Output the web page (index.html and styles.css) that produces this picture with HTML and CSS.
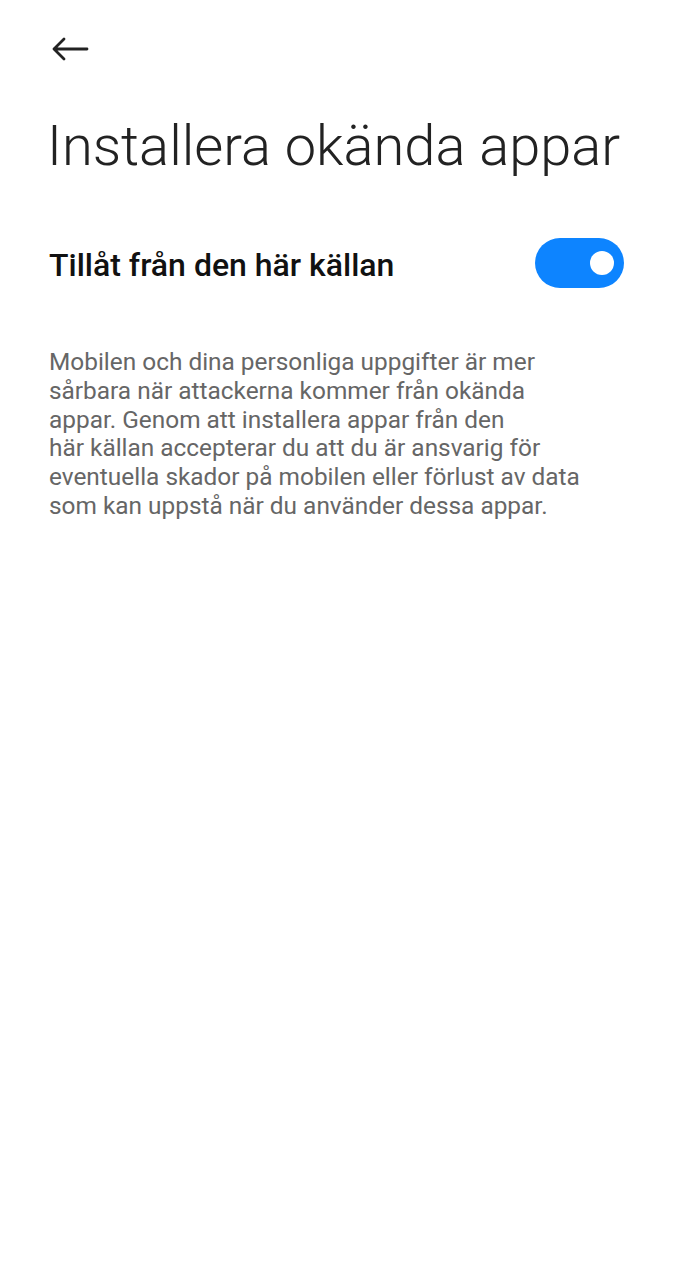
FILE: index.html
```html
<!DOCTYPE html>
<html lang="sv">
<head>
<meta charset="utf-8">
<link rel="stylesheet" href="styles.css">
</head>
<body>
<div class="page">
  <header class="topbar">
    <svg class="back" viewBox="0 0 40 26" width="40" height="26">
      <path d="M37 13 H4 M14 3 L4 13 L14 23" fill="none" stroke="#222" stroke-width="2.8" stroke-linecap="round" stroke-linejoin="round"/>
    </svg>
  </header>
  <h1 class="title">Installera okända appar</h1>
  <div class="row">
    <span class="label">Tillåt från den här källan</span>
    <div class="switch"><div class="knob"></div></div>
  </div>
  <p class="desc">Mobilen och dina personliga uppgifter är mer<br>sårbara när attackerna kommer från okända<br>appar. Genom att installera appar från den<br>här källan accepterar du att du är ansvarig för<br>eventuella skador på mobilen eller förlust av data<br>som kan uppstå när du använder dessa appar.</p>
</div>
</body>
</html>
```
FILE: styles.css
```css
html, body { margin: 0; padding: 0; background: #fff; }
body { font-family: Roboto, "Noto Sans", sans-serif; width: 675px; height: 1280px; overflow: hidden; }
.page { padding: 0 51px 0 49px; }
.topbar { height: 98px; display: flex; align-items: flex-start; padding-top: 36px; box-sizing: border-box; margin-left: 1px; }
.back { display: block; }
.title { margin: 0; font-weight: 300; font-size: 56px; line-height: 96px; color: #222; letter-spacing: 0; margin-left: -2px; height: 98px; white-space: nowrap; }
.row { display: flex; align-items: center; justify-content: space-between; margin-top: 42px; height: 50px; }
.label { font-size: 32px; font-weight: 500; color: #111; padding-top: 3px; }
.switch { width: 89px; height: 50px; border-radius: 25px; background: #0d84ff; position: relative; }
.knob { position: absolute; right: 10px; top: 13px; width: 24px; height: 24px; border-radius: 50%; background: #fff; }
.desc { margin: 60px 0 0; font-size: 24.4px; line-height: 28.8px; color: #666; white-space: nowrap; }
```
